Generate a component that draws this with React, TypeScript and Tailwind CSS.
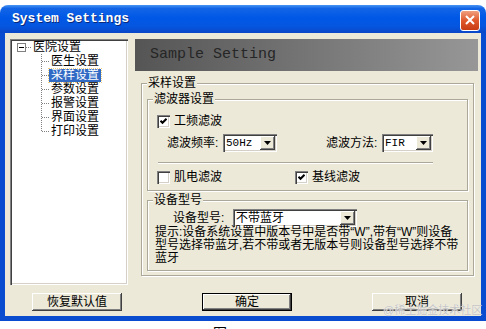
const sunken =
  "shadow-[inset_1px_1px_0_#808080,inset_2px_2px_0_#404040,inset_-1px_-1px_0_#ffffff,inset_-2px_-2px_0_#d4d0c8]";
const raised =
  "shadow-[inset_-1px_-1px_0_#404040,inset_1px_1px_0_#ffffff,inset_-2px_-2px_0_#808080]";
const etched = "border border-[#aca899] shadow-[1px_1px_0_#ffffff,inset_1px_1px_0_#ffffff]";

const treeItems = ["医生设置", "采样设置", "参数设置", "报警设置", "界面设置", "打印设置"];

const Arrow = () => (
  <svg width="7" height="4" viewBox="0 0 7 4">
    <path d="M0 0 H7 L3.5 4 Z" fill="#000" />
  </svg>
);

const Combo = ({value, className, mono}: {value: string; className: string; mono?: boolean}) => (
  <div className={`flex h-[18px] bg-white p-[2px] ${sunken} ${className}`}>
    <span
      className={`flex-1 pl-[1px] leading-[14px] ${
        mono ? "font-['Liberation_Mono',monospace] text-[11px]" : "text-[12px]"
      }`}
    >
      {value}
    </span>
    <span className={`w-[15px] h-[14px] bg-[#ECE9D8] flex items-center justify-center ${raised}`}>
      <Arrow />
    </span>
  </div>
);

const CheckBox = ({label, checked}: {label: string; checked?: boolean}) => (
  <div className="flex items-center h-[14px]">
    <span className={`w-[13px] h-[13px] bg-white flex items-center justify-center ${sunken}`}>
      {checked && (
        <svg width="7" height="7" viewBox="0 0 7 7">
          <path d="M0.5 2.8 L2.5 4.8 L6.5 0.8" stroke="#000" strokeWidth="2" fill="none" />
        </svg>
      )}
    </span>
    <span className="ml-[4px] text-[12px] leading-[14px]">{label}</span>
  </div>
);

const Group = ({
  title,
  className,
  legendClass = "ml-[5px]",
  children,
}: {
  title: string;
  className: string;
  legendClass?: string;
  children: React.ReactNode;
}) => (
  <fieldset className={`${etched} ${className}`}>
    <legend className={`${legendClass} px-[1px] bg-[#ECE9D8] text-[12px] leading-[14px]`}>{title}</legend>
    {children}
  </fieldset>
);

const Tree = () => (
  <div className={`w-[118px] h-[246px] bg-white pt-[1px] pl-[7px] ${sunken}`}>
    <div className="flex items-center h-[14px]">
      <svg width="16" height="9" viewBox="0 0 16 9" className="shrink-0">
        <rect x="0.5" y="0.5" width="8" height="8" fill="#fff" stroke="#808080" />
        <path d="M2 4.5 H7" stroke="#000" />
        <path d="M9 4.5 H15" stroke="#808080" strokeDasharray="1 1" />
      </svg>
      <span className="text-[12px] leading-[14px]">医院设置</span>
    </div>
    {treeItems.map((t, i) => {
      const last = i === treeItems.length - 1;
      const selected = t === "采样设置";
      return (
        <div key={t} className="flex items-center h-[14px]">
          <svg width="32" height="14" viewBox="0 0 32 14" className="shrink-0">
            <path d={last ? "M24.5 0 V7" : "M24.5 0 V14"} stroke="#808080" strokeDasharray="1 1" />
            <path d="M25 7.5 H32" stroke="#808080" strokeDasharray="1 1" />
          </svg>
          <span
            className={`px-[2px] text-[12px] leading-[13px] ${
              selected ? "bg-[#316AC5] text-white outline-1 outline-dotted outline-[#f0d080]" : ""
            }`}
          >
            {t}
          </span>
        </div>
      );
    })}
  </div>
);

const Button = ({label, primary}: {label: string; primary?: boolean}) => (
  <button
    className={`w-[90px] h-[18px] bg-[#ECE9D8] text-[12px] leading-[14px] ${
      primary
        ? "shadow-[inset_0_0_0_1px_#000,inset_-2px_-2px_0_#404040,inset_2px_2px_0_#ffffff,inset_-3px_-3px_0_#808080]"
        : raised
    }`}
  >
    {label}
  </button>
);

export default function App() {
  return (
    <div className="relative w-[486px] h-[329px] overflow-hidden bg-white text-black font-['Liberation_Sans','Noto_Sans_CJK_SC',sans-serif]">
      <div className="mt-[5px] flex flex-col">
        {/* title bar */}
        <div className="h-[28px] rounded-t-[8px] flex items-center justify-between pl-[12px] pr-[6px] bg-[linear-gradient(to_bottom,#4a94f4_0%,#1365e6_12%,#0058e6_45%,#0556e0_75%,#0a47c8_100%)]">
          <span className="font-['Liberation_Mono',monospace] font-bold text-[13px] text-white [text-shadow:1px_1px_0_#0a2a7a]">
            System Settings
          </span>
          <span className="w-[20px] h-[21px] mt-[2px] rounded-[3px] border border-white flex items-center justify-center bg-[linear-gradient(to_bottom,#f0a080,#e0582c_50%,#c83c14)]">
            <svg width="10" height="10" viewBox="0 0 10 10">
              <path d="M1 1 L9 9 M9 1 L1 9" stroke="#fff" strokeWidth="2" />
            </svg>
          </span>
        </div>

        {/* body */}
        <div className="h-[288px] bg-[#ECE9D8] border-x-[5px] border-b-[5px] border-[#0a4cd0] pt-[6px] pl-[5px] pr-[3px] flex flex-col">
          <div className="h-[246px] flex">
            <Tree />
            <div className="ml-[7px] flex-1 flex flex-col">
              <div className="h-[32px] flex items-center pl-[15px] bg-linear-to-r from-[#555555] to-[#979797]">
                <span className="font-['Liberation_Mono',monospace] text-[15px] text-[#262626]">Sample Setting</span>
              </div>

              <Group
                title="采样设置"
                legendClass="ml-0"
                className="mt-[5px] ml-[6px] w-[333px] pl-[5px] pt-[2px] pb-[4px]"
              >
                <Group title="滤波器设置" className="w-[321px] pt-[8px] pb-[6px]">
                  <div className="pl-[9px]">
                    <CheckBox label="工频滤波" checked />
                  </div>
                  <div className="mt-[6px] flex items-center">
                    <span className="ml-[19px] w-[56px] text-[12px] leading-[14px]">滤波频率:</span>
                    <Combo value="50Hz" className="w-[54px]" mono />
                    <span className="ml-[49px] w-[56px] text-[12px] leading-[14px]">滤波方法:</span>
                    <Combo value="FIR" className="w-[51px]" mono />
                  </div>
                  <div className="mt-[10px] ml-[10px] w-[275px] border-t border-t-[#aca899] border-b border-b-white" />
                  <div className="mt-[6px] flex pl-[9px]">
                    <div className="w-[138px]">
                      <CheckBox label="肌电滤波" />
                    </div>
                    <CheckBox label="基线滤波" checked />
                  </div>
                </Group>

                <Group title="设备型号" className="mt-[2px] w-[321px] pt-[3px] pb-[5px]">
                  <div className="flex items-center h-[16px]">
                    <span className="ml-[25px] w-[60px] text-[12px] leading-[14px]">设备型号:</span>
                    <Combo value="不带蓝牙" className="w-[124px] h-[16px]" />
                  </div>
                  <div className="pl-[7px] text-[12px] leading-[13px] whitespace-nowrap">
                    <div>提示:设备系统设置中版本号中是否带“W”,带有“W”则设备</div>
                    <div>型号选择带蓝牙,若不带或者无版本号则设备型号选择不带</div>
                    <div>蓝牙</div>
                  </div>
                </Group>
              </Group>
            </div>
          </div>

          <div className="mt-[8px] flex gap-[80px] pl-[22px]">
            <Button label="恢复默认值" />
            <Button label="确定" primary />
            <Button label="取消" />
          </div>
        </div>
      </div>

      <div className="pl-[213px] text-[14px] leading-[16px] mt-[4px]">图</div>

      <span className="absolute left-[383px] top-[304px] text-[11px] leading-[13px] text-[#c4c4c4] [text-shadow:0_0_1px_#ffffff]">
        @稀土掘金技术社区
      </span>
    </div>
  );
}
